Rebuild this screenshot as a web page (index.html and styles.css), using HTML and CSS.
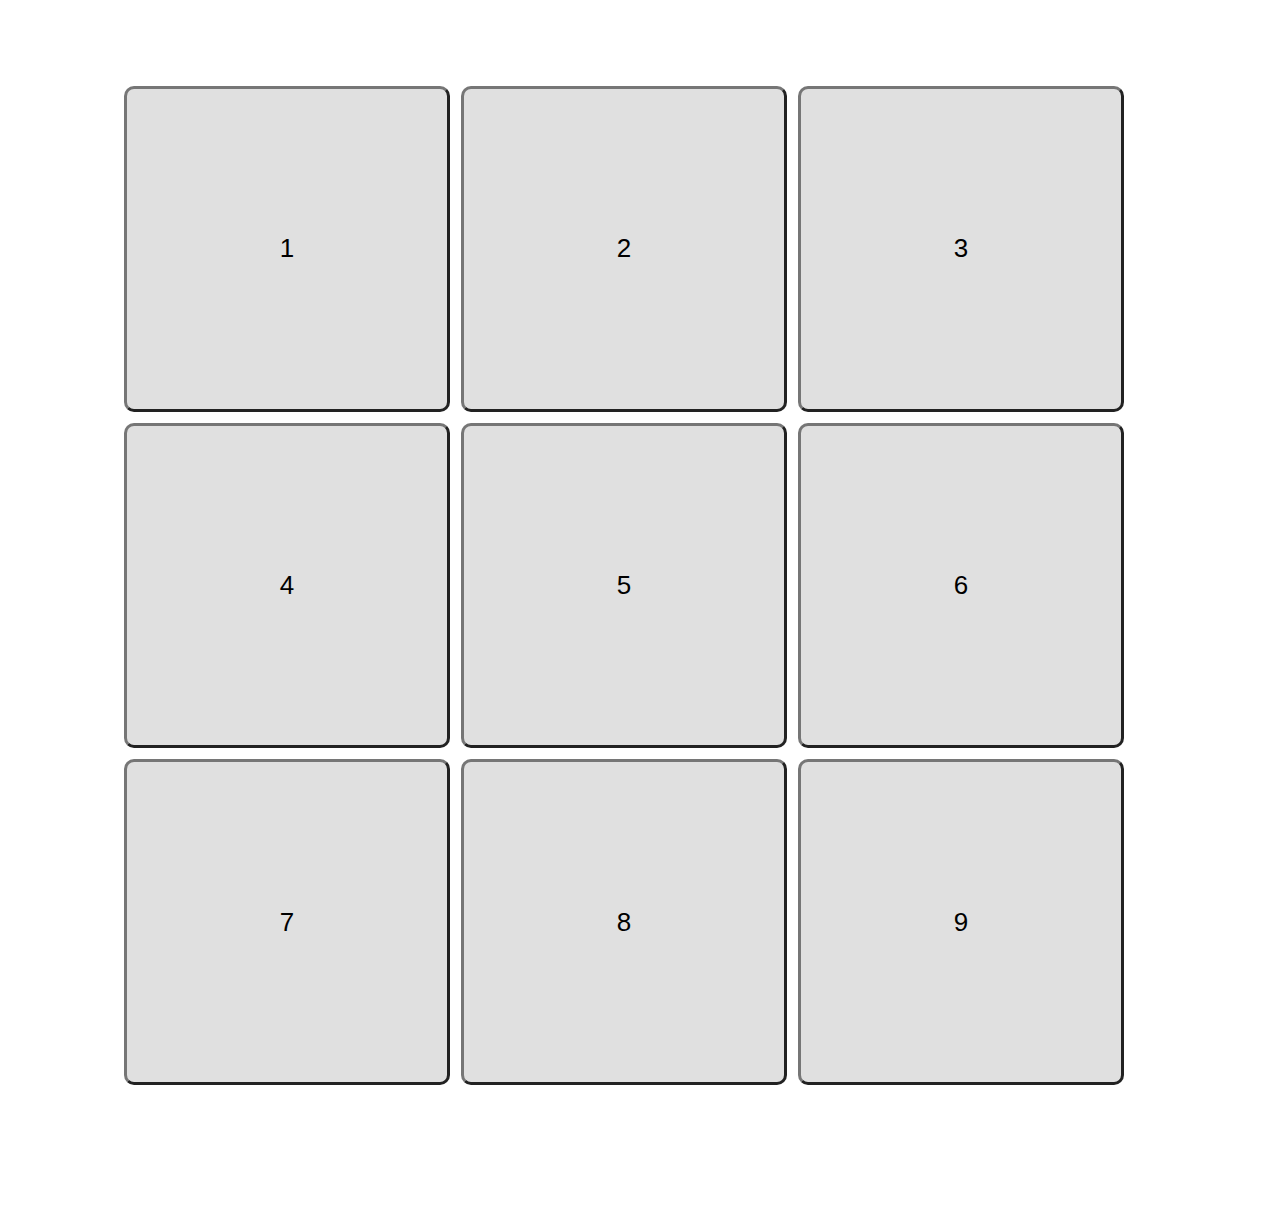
FILE: index.html
```html
<!DOCTYPE html>
<html lang="en">
<head>
    <meta charset="UTF-8">
    <title>Grid</title>
    <link rel="stylesheet" href="styles.css">
</head>
<body>
    <div class="grid">
        <div class="cell">1</div>
        <div class="cell">2</div>
        <div class="cell">3</div>
        <div class="cell">4</div>
        <div class="cell">5</div>
        <div class="cell">6</div>
        <div class="cell">7</div>
        <div class="cell">8</div>
        <div class="cell">9</div>
    </div>
</body>
</html>
```

FILE: styles.css
```css
body {
    margin: 0;
    background-color: #fff;
    font-family: "Liberation Sans", Arial, sans-serif;
}
.grid {
    display: grid;
    grid-template-columns: repeat(3, 1fr);
    grid-template-rows: repeat(3, 1fr);
    gap: 11px;
    width: 1000px;
    height: 999px;
    margin: 86px 0 0 124px;
}
.cell {
    display: flex;
    align-items: center;
    justify-content: center;
    background-color: #e0e0e0;
    border: 3px solid;
    border-color: #767676 #222 #222 #767676;
    border-radius: 10px;
    font-size: 26px;
    color: #000;
}
```
